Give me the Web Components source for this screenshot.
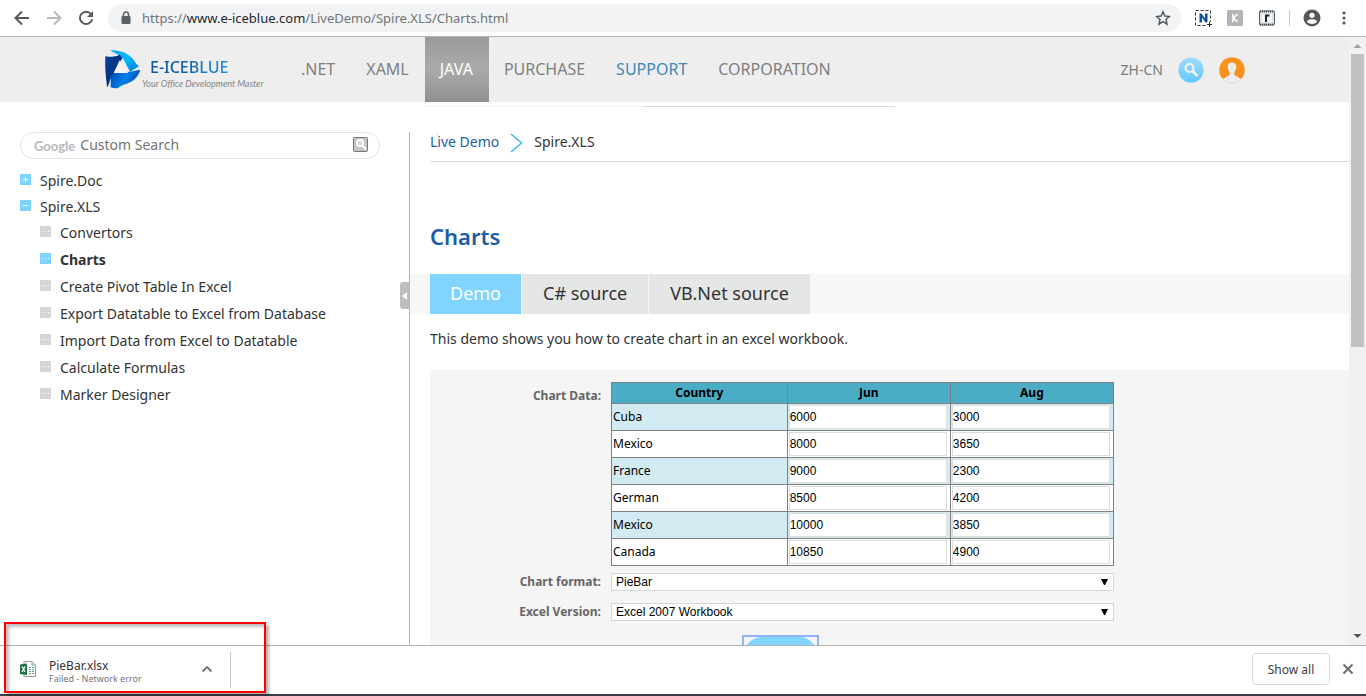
<!DOCTYPE html>
<html lang="en">
<head>
<meta charset="utf-8">
<title>Charts - Spire.XLS Live Demo</title>
<style>
  html, body { height: 100%; margin: 0; }
  body { background: #fff; font-family: "Noto Sans", "Open Sans", sans-serif; color: #333; overflow: hidden; }
</style>
</head>
<body>
<browser-window>
  <browser-toolbar slot="toolbar"></browser-toolbar>
  <site-header>
    <nav-item>.NET</nav-item>
    <nav-item>XAML</nav-item>
    <nav-item active>JAVA</nav-item>
    <nav-item>PURCHASE</nav-item>
    <nav-item tone="blue">SUPPORT</nav-item>
    <nav-item>CORPORATION</nav-item>
  </site-header>
  <demo-layout>
    <search-box slot="side"></search-box>
    <tree-list slot="side">
      <tree-item icon="plus">Spire.Doc</tree-item>
      <tree-item icon="minus">Spire.XLS</tree-item>
      <tree-item icon="dots">Convertors</tree-item>
      <tree-item icon="dots" current>Charts</tree-item>
      <tree-item icon="dots">Create Pivot Table In Excel</tree-item>
      <tree-item icon="dots">Export Datatable to Excel from Database</tree-item>
      <tree-item icon="dots">Import Data from Excel to Datatable</tree-item>
      <tree-item icon="dots">Calculate Formulas</tree-item>
      <tree-item icon="dots">Marker Designer</tree-item>
    </tree-list>
    <bread-crumbs><a href="#demo" slot="parent">Live Demo</a>Spire.XLS</bread-crumbs>
    <page-title>Charts</page-title>
    <tab-strip>
      <tab-button selected>Demo</tab-button>
      <tab-button>C# source</tab-button>
      <tab-button>VB.Net source</tab-button>
    </tab-strip>
    <intro-text>This demo shows you how to create chart in an excel workbook.</intro-text>
    <chart-form></chart-form>
  </demo-layout>
  <page-scrollbar slot="scrollbar"></page-scrollbar>
  <download-bar slot="downloads"></download-bar>
</browser-window>

<script>
const define = (name, html, setup) => customElements.define(name, class extends HTMLElement {
  constructor() {
    super();
    const t = document.createElement('template');
    t.innerHTML = html;
    this.attachShadow({ mode: 'open' }).append(t.content.cloneNode(true));
  }
  connectedCallback() { if (setup) setup(this, this.shadowRoot); }
});

define('browser-window', `
<style>
  :host { display: flex; flex-direction: column; height: 100vh; }
  .view { flex: 1; min-height: 0; display: flex; }
  .page { flex: 1; min-width: 0; overflow: hidden; display: flex; flex-direction: column; }
</style>
<slot name="toolbar"></slot>
<div class="view"><div class="page"><slot></slot></div><slot name="scrollbar"></slot></div>
<slot name="downloads"></slot>`);

define('browser-toolbar', `
<style>
  :host { display: flex; align-items: center; height: 36px; border-bottom: 1px solid #b4b4b2; background: #fff; padding: 0 12px; }
  button { border: 0; padding: 0; background: none; display: block; }
  svg { display: block; }
  .nav { display: flex; gap: 12px; margin-right: 12px; }
  .bar { flex: 1; height: 28px; border-radius: 14px; background: #f1f3f4; display: flex; align-items: center; padding: 0 10px 0 13px; gap: 11px; }
  .url { flex: 1; font-size: 13px; line-height: 28px; color: #70757a; white-space: nowrap; }
  .url b { font-weight: 400; color: #25282c; }
  .ext { display: flex; align-items: center; gap: 12px; margin-left: 12px; }
  .sep { width: 1px; height: 16px; background: #c8c8c8; }
</style>
<div class="nav">
  <button aria-label="Back"><svg width="20" height="20" viewBox="0 0 20 20" fill="none" stroke="#55595e" stroke-width="2"><path d="M17 10H4M10 3.500L3.500 10l6.500 6.500"/></svg></button>
  <button aria-label="Forward"><svg width="20" height="20" viewBox="0 0 20 20" fill="none" stroke="#b9bbbe" stroke-width="2"><path d="M3 10h13M10 3.500l6.500 6.500-6.500 6.500"/></svg></button>
  <button aria-label="Reload"><svg width="20" height="20" viewBox="0 0 20 20" fill="none" stroke="#55595e" stroke-width="2"><path d="M15 6a6.200 6.200 0 1 0 1.200 5.200"/><path d="M17 3v6h-6z" fill="#55595e" stroke="none"/></svg></button>
</div>
<div class="bar">
  <svg width="10" height="14" viewBox="0 0 10 14"><path d="M2.500 6V3.500a2.500 2.500 0 0 1 5 0V6" fill="none" stroke="#5c6065" stroke-width="1.500"/><rect x="0.500" y="5" width="9" height="8" rx="1" fill="#5c6065"/></svg>
  <span class="url">https://<b>www.e-iceblue.com</b>/LiveDemo/Spire.XLS/Charts.html</span>
  <button aria-label="Bookmark"><svg width="16" height="16" viewBox="0 0 16 16" fill="none" stroke="#55595e" stroke-width="1.500"><path d="M8 1.800l1.900 4.200 4.500.5-3.400 3 1 4.600L8 11.700l-4 2.400 1-4.600-3.400-3 4.500-.5z"/></svg></button>
</div>
<div class="ext">
  <svg width="20" height="20" viewBox="0 0 20 20"><rect x="2.500" y="2.500" width="15" height="15" fill="none" stroke="#333" stroke-dasharray="3 2"/><path d="M6.500 14.500V5.500h2l3.500 5v-5h2.500v9h-2L9 9.500v5z" fill="#0b4ea2"/><path d="M14 14h6v6h-6z" fill="#fff"/><path d="M16.500 14v5M14 16.500h5" stroke="#222"/></svg>
  <svg width="20" height="20" viewBox="0 0 20 20"><rect x="2" y="2" width="16" height="16" rx="1" fill="#b5b5b5"/><path d="M8 6v8M12.500 6l-4 4 4 4" fill="none" stroke="#fff" stroke-width="1.600"/></svg>
  <svg width="20" height="20" viewBox="0 0 20 20"><rect x="2.500" y="3" width="15" height="14" rx="1" fill="#dfe3e6" stroke="#5b6066"/><path d="M3 3.500h14M3 16.500h14" stroke="#4b5055" stroke-width="2" stroke-dasharray="1 1"/><rect x="5" y="6" width="10" height="8" fill="#f6f7f8"/><path d="M9 14V6.500M8.500 7.500h4" stroke="#222" stroke-width="2"/></svg>
  <span class="sep"></span>
  <svg width="20" height="20" viewBox="0 0 20 20"><circle cx="10" cy="10" r="8.500" fill="#55595e"/><circle cx="10" cy="7.300" r="2.600" fill="#fff"/><path d="M4.800 13.300c1-1.800 3.500-2.100 5.200-2.100s4.200.3 5.200 2.100a6.300 6.300 0 0 1-10.400 0z" fill="#fff"/></svg>
  <svg width="20" height="20" viewBox="0 0 20 20" fill="#55595e"><circle cx="10" cy="5" r="1.600"/><circle cx="10" cy="10" r="1.600"/><circle cx="10" cy="15" r="1.600"/></svg>
</div>`);

define('site-header', `
<style>
  :host { display: flex; flex: none; align-items: stretch; height: 65px; background: #eee; padding: 0 104px; }
  .logo { display: flex; align-items: center; width: 182px; text-decoration: none; }
  .logo svg { flex: none; }
  .words { display: flex; flex-direction: column; white-space: nowrap; padding-top: 8px; }
  .name { font-size: 16px; line-height: 20px; font-weight: 500; padding-left: 10px; background: linear-gradient(100deg, #0b57a4 30%, #1f8fdc 70%, #0c64ae); -webkit-background-clip: text; background-clip: text; color: transparent; }
  .tag { font: italic 9px/14px Lato, sans-serif; color: #858585; padding-left: 2px; }
  nav { display: flex; }
  .right { margin-left: auto; display: flex; align-items: center; gap: 15px; }
  a { color: #7a7a7a; text-decoration: none; }
  .lang { font-size: 14px; line-height: 20px; }
  button { border: 0; padding: 0; background: none; }
  .right svg { display: block; }
</style>
<a class="logo" href="#home">
  <svg width="36" height="40" viewBox="0 3 108 120">
    <defs>
      <linearGradient id="a" x1="0" x2="1" y2="1"><stop stop-color="#00a5f5"/><stop offset="0.500" stop-color="#00b9ff"/><stop offset="1" stop-color="#0077d8"/></linearGradient>
      <linearGradient id="b" x2="1" y2="1"><stop stop-color="#06459a"/><stop offset="0.600" stop-color="#002f80"/><stop offset="1" stop-color="#004fb4"/></linearGradient>
      <linearGradient id="c" x2="1" y2="0.300"><stop stop-color="#0045a8"/><stop offset="0.600" stop-color="#0080ea"/><stop offset="1" stop-color="#0053b4"/></linearGradient>
    </defs>
    <path d="M19 4C45 2 75 12 90 34c5 9 8 13 15 18L78 68 60 34C49 17 38 17 19 4z" fill="url(#a)"/>
    <path d="M4 22c10 3 32 1 43-5l8 10L30 72 18 92c-2 8-2 14-9 23C8 94 2 70 4 22z" fill="url(#b)"/>
    <path d="M17 83l12-11c20-1 50-2 80-10C103 84 88 98 68 104c-13 5-20 6-26 14-8-1-18 0-22-4-1-12 3-18-3-31z" fill="url(#c)"/>
    <path d="M47 34L29 72h43z" fill="#f4f4f4"/>
  </svg>
  <span class="words"><span class="name">E-ICEBLUE</span><span class="tag">Your Office Development Master</span></span>
</a>
<nav><slot></slot></nav>
<div class="right">
  <a class="lang" href="#zh">ZH-CN</a>
  <button aria-label="Search"><svg width="26" height="26" viewBox="0 0 26 26"><defs><linearGradient id="s" x2="0" y2="1"><stop stop-color="#9fdcff"/><stop offset="1" stop-color="#62c6fb"/></linearGradient></defs><circle cx="13" cy="13" r="12.600" fill="url(#s)"/><circle cx="11.500" cy="11" r="4" fill="none" stroke="#f2f2f2" stroke-width="2.200"/><path d="M14.500 14l5 5" stroke="#f2f2f2" stroke-width="3"/></svg></button>
  <button aria-label="Account"><svg width="26" height="26" viewBox="0 0 26 26"><defs><clipPath id="k"><circle cx="13" cy="13" r="12.800"/></clipPath></defs><g clip-path="url(#k)"><path d="M0 0h26v26H0z" fill="#f7921e"/><path d="M13 5.500c3 0 4.500 2 4.200 4.800-.2 2.200-.8 3.500-1.800 4.700v3l6.600 4V27H4v-5l6.600-4v-3c-1-1.200-1.600-2.500-1.800-4.700C8.500 7.500 10 5.500 13 5.500z" fill="#ececec"/></g></svg></button>
</div>`);

define('nav-item', `
<style>
  :host { display: block; --c: #7f7f7f; }
  :host([tone="blue"]) { --c: #4089b5; }
  :host([active]) { --c: #fff; background: linear-gradient(#9b9b9b, #aaa 50%, #909090); }
  a { display: block; padding: 0 16px 0 15px; font-size: 16px; line-height: 65px; color: var(--c); text-decoration: none; }
</style><a href="#nav"><slot></slot></a>`);

define('demo-layout', `
<style>
  :host { display: flex; flex-direction: column; flex: 1; min-height: 0; }
  .rule { display: flex; height: 1px; width: 470px; margin: 4px 0 25px 425px; flex: none; }
  .rule i { flex: 218; background: #f3f3f3; }
  .rule i + i { flex: 252; background: #ddd; }
  .cols { flex: 1; min-height: 0; display: flex; }
  aside { position: relative; flex: none; width: 410px; box-sizing: border-box; border-right: 1px solid #b5b5b5; padding: 0 29px 0 20px; }
  .grip { position: absolute; right: 0; top: 150px; width: 9px; height: 27px; border: 0; padding: 0; border-radius: 3px 0 0 3px; background: #bebebe; }
  .grip svg { display: block; margin: auto; }
  main { position: relative; flex: 1; min-width: 0; overflow: hidden; }
</style>
<div class="rule"><i></i><i></i></div>
<div class="cols">
  <aside><slot name="side"></slot><button class="grip" aria-label="Collapse"><svg width="5" height="8" viewBox="0 0 5 8"><path d="M5 0v8L0 4z" fill="#fff"/></svg></button></aside>
  <main><slot></slot></main>
</div>`);

define('search-box', `
<style>
  :host { display: block; margin-bottom: 9px; }
  form { display: flex; align-items: center; height: 27px; box-sizing: border-box; border: 1px solid #e2e2e2; border-radius: 14px; padding: 0 11px 0 13px; margin: 0; }
  .g { font-family: Lato, sans-serif; font-size: 13px; font-weight: 700; line-height: 20px; color: #b9b9b9; }
  input { flex: 1; min-width: 0; border: 0; outline: 0; padding: 0 0 2px 5px; background: none; font: 14px/20px "Noto Sans", sans-serif; color: #333; }
  input::placeholder { color: #757575; opacity: 1; }
  button { border: 0; padding: 0; background: none; margin-bottom: 2px; }
  svg { display: block; }
</style>
<form onsubmit="return false"><span class="g">Google</span><input aria-label="Custom Search" placeholder="Custom Search">
<button aria-label="Search"><svg width="15" height="15" viewBox="0 0 15 15"><rect x="0.500" y="0.500" width="14" height="14" rx="1" fill="#c6c6c6" stroke="#777"/><circle cx="7" cy="6" r="3.200" fill="#d8d8d8" stroke="#fff" stroke-width="1.800"/><path d="M9.300 8.500l4 4" stroke="#fff" stroke-width="2"/></svg></button></form>`);

define('tree-list', `<style>:host { display: block; }</style><slot></slot>`);

define('tree-item', `
<style>
  :host { display: block; --b: #7fd3ff; }
  :host([icon="dots"]) { --b: #d6d6d8; padding-left: 20px; }
  :host([icon="dots"][current]) { --b: #7fd3ff; font-weight: 700; }
  a { display: flex; align-items: center; gap: 9px; height: 26px; font-size: 14px; line-height: 20px; color: #333; text-decoration: none; white-space: nowrap; }
  :host([icon="dots"]) a { height: 27px; }
  :host([icon="dots"]) span { margin-bottom: 2px; }
  svg { flex: none; margin-bottom: 4px; }
</style>
<a href="#item"><svg width="11" height="11" viewBox="0 0 11 11"><path d="M0 0h11v11H0z" fill="var(--b)"/><path class="m" stroke="#fff" fill="none"/></svg><span><slot></slot></span></a>`,
(el, root) => root.querySelector('.m').setAttribute('d', {
  plus: 'M3 5.5h5M5.500 3v5', minus: 'M3 5.500h5', dots: 'M2 5.500h1M5 5.500h1M8 5.500h1'
}[el.getAttribute('icon')]));

define('bread-crumbs', `
<style>
  :host { display: flex; align-items: center; height: 29px; margin-left: 20px; border-bottom: 1px solid #d9d9d9; font-size: 14px; line-height: 20px; color: #333; position: relative; }
  ::slotted(a) { color: #1c5fa8; text-decoration: none; }
  .ar { margin: 2px 11px 0; }
  .nav { display: flex; align-items: center; margin-bottom: 10px; }
  .beam { position: absolute; left: 3px; top: -8px; }
</style>
<svg class="beam" width="8" height="15" viewBox="0 0 8 15" fill="none" stroke="#ebebeb"><path d="M1 0.500h6M4.500 1v14"/></svg>
<div class="nav"><slot name="parent"></slot><svg class="ar" width="13" height="20" viewBox="0 0 13 20" fill="none" stroke="#45b8fa" stroke-width="1.600"><path d="M1 1l10.500 9L1 19"/></svg><slot></slot></div>`);

define('page-title', `
<style>
  :host { display: block; margin: 59px 0 23px 20px; }
  h1 { margin: 0; font-size: 22px; line-height: 30px; font-weight: 600; color: #1c5ca4; }
</style><h1><slot></slot></h1>`);

define('tab-strip', `<style>:host { display: flex; gap: 1px; padding-left: 20px; background: #f7f7f7; }</style><slot></slot>`);

define('tab-button', `
<style>
  :host { display: block; }
  button { display: block; height: 40px; border: 0; padding: 0 21px 2px; background: #e5e7e6; color: #333; font: 18px/38px "Noto Sans", sans-serif; }
  :host([selected]) button { background: #80d4ff; color: #fff; padding: 0 20px 2px; }
</style><button role="tab"><slot></slot></button>`);

define('intro-text', `<style>:host { display: block; margin: 15px 0 21px 20px; font-size: 14px; line-height: 20px; color: #333; }</style><slot></slot>`);

define('chart-form', `
<style>
  :host { display: block; margin-left: 20px; background: #f5f5f5; padding-top: 12px; height: 400px; }
  .row { display: grid; grid-template-columns: 171px minmax(0, 503px); column-gap: 10px; min-height: 30px; align-items: center; }
  .row.top { align-items: start; min-height: 185px; }
  label, .lab { text-align: right; font-size: 12px; line-height: 18px; font-weight: 700; color: #666; }
  .top .lab { padding-top: 5px; }
  table { width: 100%; border-collapse: collapse; table-layout: fixed; font-size: 12px; line-height: 16px; color: #000; }
  col:first-child { width: 35%; }
  th, td { border: 1px solid #808080; padding: 0 1px; text-align: left; background: #fff; height: 26px; box-sizing: border-box; }
  th { background: #4bacc6; text-align: center; height: 21px; font-weight: 700; }
  tbody tr { height: 27px; }
  tbody tr:nth-child(odd) td { background: #d2eaf1; }
  td input { display: block; width: 99%; height: 24px; box-sizing: border-box; border: 1px solid #ddd; padding: 0; background: #fff; font: 12px "Liberation Sans", Arial, sans-serif; color: #000; outline: 0; }
  .pick { display: grid; align-items: center; }
  .pick > * { grid-area: 1 / 1; }
  select { appearance: none; height: 18px; border: 1px solid #d6d6d6; border-radius: 0; background: #fff; padding: 0 4px; font: 12px/16px "Liberation Sans", Arial, sans-serif; color: #000; width: 100%; }
  .pick svg { justify-self: end; margin-right: 6px; pointer-events: none; }
  .go { justify-self: start; margin: 8px 0 0 131px; padding: 0; border: 2px solid #8fb3fb; background: none; width: 77px; height: 40px; }
  .go i { display: block; height: 36px; border-radius: 18px; background: #80d4ff; }
</style>
<form onsubmit="return false">
<div class="row top"><span class="lab">Chart Data:</span>
<table><colgroup><col><col><col></colgroup><thead><tr><th>Country</th><th>Jun</th><th>Aug</th></tr></thead><tbody></tbody></table></div>
<div class="row"><label for="fmt">Chart format:</label><div class="pick"><select id="fmt"><option>PieBar</option></select><svg width="7" height="6" viewBox="0 0 7 6"><path d="M0 0h7L4 6H3z"/></svg></div></div>
<div class="row"><label for="ver">Excel Version:</label><div class="pick"><select id="ver"><option>Excel 2007 Workbook</option></select><svg width="7" height="6" viewBox="0 0 7 6"><path d="M0 0h7L4 6H3z"/></svg></div></div>
<div class="row"><span></span><button class="go" aria-label="Run"><i></i></button></div>
</form>`,
(el, root) => {
  root.querySelector('tbody').innerHTML = [
    ['Cuba', 6000, 3000], ['Mexico', 8000, 3650], ['France', 9000, 2300],
    ['German', 8500, 4200], ['Mexico', 10000, 3850], ['Canada', 10850, 4900]
  ].map(([c, j, a]) => `<tr><td>${c}</td><td><input aria-label="${c} Jun" value="${j}"></td><td><input aria-label="${c} Aug" value="${a}"></td></tr>`).join('');
});

define('page-scrollbar', `
<style>
  :host { display: flex; flex-direction: column; align-items: center; width: 17px; flex: none; background: #f1f1f1; }
  svg { flex: none; display: block; }
  .track { flex: 1; width: 13px; }
  .thumb { height: 51%; background: #c1c1c1; }
</style>
<svg width="17" height="17" viewBox="0 0 17 17"><path d="M4.500 11l4-4 4 4z" fill="#a3a3a3"/></svg>
<div class="track"><div class="thumb"></div></div>
<svg width="17" height="17" viewBox="0 0 17 17"><path d="M4.500 6l4 4 4-4z" fill="#505050"/></svg>`);

define('download-bar', `
<style>
  :host { position: relative; display: flex; align-items: center; flex: none; height: 48px; border-top: 1px solid #b4b4b4; border-bottom: 2px solid #3c4048; background: #fff; padding: 0 10px 0 20px; }
  .text { display: flex; flex-direction: column; margin-left: 13px; width: 152px; white-space: nowrap; padding-top: 3px; }
  .file { font-size: 12px; line-height: 14px; color: #333; }
  .state { font-size: 9px; line-height: 12px; color: #757575; }
  .sep { width: 1px; height: 36px; background: #ccc; margin-left: 17px; }
  button { border: 0; padding: 0; background: none; }
  svg { display: block; margin-bottom: 2px; }
  .all { margin: 0 10px 2px auto; width: 78px; height: 32px; box-sizing: border-box; border: 1px solid #d8dade; border-radius: 4px; background: #fff; font: 12px "Noto Sans", sans-serif; color: #3c4043; }
  .mark { position: absolute; left: 4px; bottom: 1px; width: 262px; height: 71px; box-sizing: border-box; border: 2px solid #f00; box-shadow: 3px 3px 3px rgba(0,0,0,.3), inset 3px 3px 3px rgba(0,0,0,.25); pointer-events: none; }
</style>
<svg width="16" height="16" viewBox="0 0 16 16"><path d="M4 .5h8l3.500 3.500v11.500H4z" fill="#fff" stroke="#9a9a9a"/><path d="M12 .5V4h3.500" fill="none" stroke="#9a9a9a"/><path d="M9 6.500h2M12 6.500h2M9 8.500h2M12 8.500h2M9 10.500h2M12 10.500h2M9 12.500h2M12 12.500h2" stroke="#5fa37c"/><path d="M0 3.500l7-1v11.500l-7-1z" fill="#1e7145"/><path d="M2 5.500l3 5.500M5 5.500l-3 5.500" stroke="#fff" stroke-width="1.300"/></svg>
<div class="text"><span class="file">PieBar.xlsx</span><span class="state">Failed - Network error</span></div>
<button aria-label="Options"><svg width="12" height="8" viewBox="0 0 12 8" fill="none" stroke="#70757a" stroke-width="1.800"><path d="M1.500 6.500L6 2l4.500 4.500"/></svg></button>
<span class="sep"></span>
<button class="all">Show all</button>
<button aria-label="Close"><svg width="16" height="16" viewBox="0 0 16 16" stroke="#6b7075" stroke-width="2"><path d="M3.500 3.500l9 9M12.500 3.500l-9 9"/></svg></button>
<div class="mark"></div>`);
</script>
</body>
</html>
